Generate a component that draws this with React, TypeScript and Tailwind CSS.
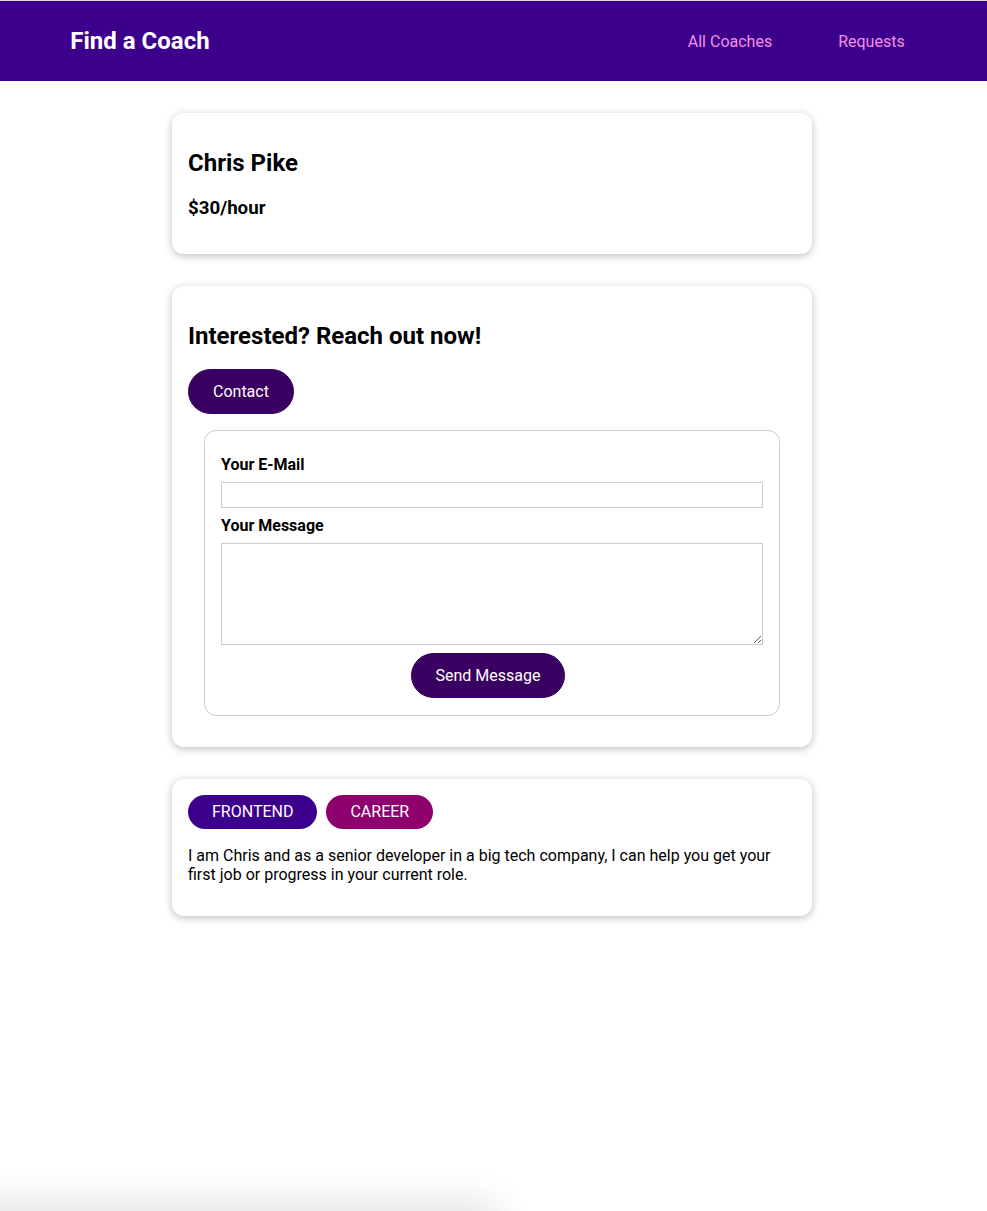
const font = { fontFamily: "Roboto, 'Liberation Sans', sans-serif" };

const Header = () => (
  <header className="w-full h-20 bg-[#3d008d] flex items-center justify-center">
    <nav className="w-[90%] mx-auto flex justify-between items-center">
      <h1 className="m-0 -ml-1 text-[24px] leading-[28px] font-bold">
        <a href="#" className="inline-block px-6 py-3 text-white border border-transparent">Find a Coach</a>
      </h1>
      <ul className="flex list-none m-0 p-0">
        <li className="mx-2">
          <a href="#" className="inline-block px-6 py-3 text-[16px] leading-[19px] text-[#f391e3] border border-transparent">All Coaches</a>
        </li>
        <li className="mx-2">
          <a href="#" className="inline-block px-6 py-3 text-[16px] leading-[19px] text-[#f391e3] border border-transparent">Requests</a>
        </li>
      </ul>
    </nav>
  </header>
);

const Card = ({ children }: { children: React.ReactNode }) => (
  <section className="w-[640px] mx-auto my-8 p-4 bg-white rounded-xl shadow-[0_2px_8px_rgba(0,0,0,0.26)]">
    {children}
  </section>
);

const PillButton = ({ children }: { children: React.ReactNode }) => (
  <button className="inline-block px-6 py-3 text-[16px] leading-[19px] text-white bg-[#3a0061] border border-[#3a0061] rounded-[30px] cursor-pointer">
    {children}
  </button>
);

const ContactForm = () => (
  <form className="mx-4 mt-4 mb-[15px] px-4 pt-4 pb-[17px] border border-[#ccc] rounded-xl">
    <div className="my-2">
      <label htmlFor="email" className="block mb-2 font-bold text-[16px] leading-[19px]">Your E-Mail</label>
      <input id="email" type="email" className="block w-full h-[26px] px-[2px] py-[2px] border border-[#ccc] outline-none" />
    </div>
    <div className="my-2">
      <label htmlFor="message" className="block mb-2 font-bold text-[16px] leading-[19px]">Your Message</label>
      <textarea id="message" rows={5} className="block w-full h-[102px] px-[2px] py-[2px] border border-[#ccc] outline-none" />
    </div>
    <div className="text-center pr-2">
      <PillButton>Send Message</PillButton>
    </div>
  </form>
);

export default function App() {
  return (
    <div className="min-h-screen bg-white text-black" style={font}>
      <div className="h-px bg-[#d8dcd8]" />
      <Header />
      <main className="pr-[3px]">
        <Card>
          <h2 className="text-[24px] leading-[28px] font-bold my-[20px]">Chris Pike</h2>
          <h3 className="text-[18.72px] leading-[22px] font-bold my-[19px]">$30/hour</h3>
        </Card>
        <Card>
          <h2 className="text-[24px] leading-[28px] font-bold mt-[20px] mb-[19px]">Interested? Reach out now!</h2>
          <div>
            <PillButton>Contact</PillButton>
          </div>
          <ContactForm />
        </Card>
        <Card>
          <div className="flex">
            <span className="flex items-center h-[34px] px-6 mr-[9px] text-[16px] text-white uppercase rounded-[30px] bg-[#3d008d]">Frontend</span>
            <span className="flex items-center h-[34px] px-6 text-[16px] text-white uppercase rounded-[30px] bg-[#8d006e]">Career</span>
          </div>
          <p className="mt-[17px] mb-[16px] text-[16px] leading-[19px]">
            I am Chris and as a senior developer in a big tech company, I can help you get your first job or progress in your current role.
          </p>
        </Card>
      </main>
      <div className="fixed left-[-30px] bottom-[-22px] w-[520px] h-[22px] rounded-full shadow-[0_0_34px_14px_rgba(0,0,0,0.09)] pointer-events-none" />
    </div>
  );
}
